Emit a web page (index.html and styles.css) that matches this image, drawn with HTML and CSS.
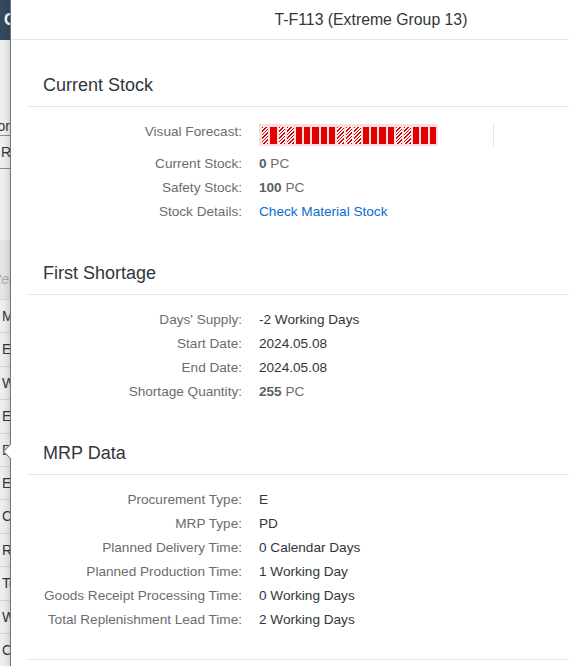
FILE: index.html
```html
<!DOCTYPE html>
<html lang="en">
<head>
<meta charset="utf-8">
<title>T-F113 (Extreme Group 13)</title>
<link rel="stylesheet" href="styles.css">
</head>
<body>
<div class="app">
  <div class="bg">
    <div class="bg-shell">Check</div>
    <div class="bg-filter">
      <div class="bg-label">Vendor</div>
      <div class="bg-input">RM</div>
    </div>
    <div class="bg-search">Material</div>
    <div class="bg-table">
      <div class="bg-row">MRP</div>
      <div class="bg-row">Ext</div>
      <div class="bg-row">Wor</div>
      <div class="bg-row">Ext</div>
      <div class="bg-row">Dis</div>
      <div class="bg-row">Ext</div>
      <div class="bg-row">Cur</div>
      <div class="bg-row">Rep</div>
      <div class="bg-row">Tot</div>
      <div class="bg-row">Wor</div>
      <div class="bg-row">Con</div>
    </div>
  </div>

  <div class="popover">
    <div class="pop-arrow"></div>
    <div class="pop-header">T-F113 (Extreme Group 13)</div>

    <section class="sec sec-first">
      <h2 class="sec-title">Current Stock</h2>
      <div class="form">
        <div class="lbl lbl-tall">Visual Forecast:</div>
        <div class="val val-tall">
          <div class="fc-wrap">
            <div class="fc-bar">
              <span class="seg hatch"></span><span class="seg"></span><span class="seg hatch"></span><span class="seg hatch"></span><span class="seg"></span><span class="seg"></span><span class="seg"></span><span class="seg"></span><span class="seg"></span><span class="seg hatch"></span><span class="seg hatch"></span><span class="seg hatch"></span><span class="seg"></span><span class="seg"></span><span class="seg"></span><span class="seg"></span><span class="seg hatch"></span><span class="seg hatch"></span><span class="seg"></span><span class="seg"></span><span class="seg"></span>
            </div>
          </div>
        </div>
        <div class="lbl">Current Stock:</div>
        <div class="val"><span class="num">0</span> <span class="unit">PC</span></div>
        <div class="lbl">Safety Stock:</div>
        <div class="val"><span class="num">100</span> <span class="unit">PC</span></div>
        <div class="lbl">Stock Details:</div>
        <div class="val"><a class="link" href="#">Check Material Stock</a></div>
      </div>
    </section>

    <section class="sec">
      <h2 class="sec-title">First Shortage</h2>
      <div class="form">
        <div class="lbl">Days' Supply:</div>
        <div class="val">-2 Working Days</div>
        <div class="lbl">Start Date:</div>
        <div class="val">2024.05.08</div>
        <div class="lbl">End Date:</div>
        <div class="val">2024.05.08</div>
        <div class="lbl">Shortage Quantity:</div>
        <div class="val"><span class="num">255</span> <span class="unit">PC</span></div>
      </div>
    </section>

    <section class="sec sec-last">
      <h2 class="sec-title">MRP Data</h2>
      <div class="form">
        <div class="lbl">Procurement Type:</div>
        <div class="val">E</div>
        <div class="lbl">MRP Type:</div>
        <div class="val">PD</div>
        <div class="lbl">Planned Delivery Time:</div>
        <div class="val">0 Calendar Days</div>
        <div class="lbl">Planned Production Time:</div>
        <div class="val">1 Working Day</div>
        <div class="lbl">Goods Receipt Processing Time:</div>
        <div class="val">0 Working Days</div>
        <div class="lbl">Total Replenishment Lead Time:</div>
        <div class="val">2 Working Days</div>
      </div>
    </section>
    <div class="pop-footer"></div>
  </div>
</div>
</body>
</html>
```

FILE: styles.css
```css
* { box-sizing: border-box; }

html, body {
  margin: 0;
  padding: 0;
  background: #ffffff;
  overflow: hidden;
}

body {
  font-family: "Liberation Sans", Arial, sans-serif;
  color: #32363a;
}

.app {
  display: flex;
  width: 569px;
  height: 666px;
  overflow: hidden;
}

/* ---- background application (behind the popover) ---- */
.bg {
  flex: none;
  width: 10px;
  height: 666px;
  overflow: hidden;
  background: #ededee;
  display: flex;
  flex-direction: column;
  font-size: 14px;
  white-space: nowrap;
}

.bg-shell {
  flex: none;
  height: 40px;
  background: #354a5f;
  color: #ffffff;
  font-size: 16px;
  font-weight: bold;
  line-height: 40px;
  padding-left: 4px;
}

.bg-filter {
  flex: none;
  height: 200px;
  padding-top: 78px;
  background: #efeff0;
}

.bg-label {
  display: flex;
  justify-content: flex-end;
  height: 17px;
  line-height: 17px;
  color: #32363a;
  overflow: hidden;
}

.bg-input {
  height: 34px;
  border-top: 1px solid #8a8f94;
  border-bottom: 1px solid #8a8f94;
  line-height: 32px;
  padding-left: 1px;
  color: #32363a;
}

.bg-search {
  flex: none;
  height: 59px;
  background: #e6e6e7;
  color: #a9acb0;
  font-style: italic;
  line-height: 78px;
  text-indent: -22px;
}

.bg-table {
  flex: none;
  display: flex;
  flex-direction: column;
}

.bg-row {
  height: 33.4px;
  border-top: 1px solid #d4d5d6;
  line-height: 33px;
  padding-left: 2px;
  color: #32363a;
  background: #eeeeef;
}

/* ---- popover ---- */
.popover {
  position: relative;
  flex: none;
  width: 721px;
  height: 666px;
  background: #ffffff;
  border-left: 1px solid #6f767d;
  box-shadow: -2px 0 6px rgba(0, 0, 0, 0.15);
}

.pop-arrow {
  position: absolute;
  left: -6px;
  top: 446px;
  width: 11px;
  height: 11px;
  background: #ffffff;
  border-left: 1px solid #6f767d;
  border-bottom: 1px solid #6f767d;
  transform: rotate(45deg);
}

.pop-header {
  height: 40px;
  border-bottom: 1px solid #e5e5e5;
  text-align: center;
  font-size: 15.8px;
  line-height: 39px;
  color: #32363a;
}

.sec {
  margin-left: 16px;
}

.sec-first {
  margin-top: 24px;
}

.sec-title {
  margin: 0;
  height: 43px;
  padding-left: 16px;
  border-bottom: 1px solid #e5e5e5;
  font-size: 18px;
  font-weight: normal;
  line-height: 42px;
  color: #32363a;
}

.form {
  display: grid;
  grid-template-columns: 215px 1fr;
  column-gap: 17px;
  padding: 13px 0 28px 0;
  font-size: 13.6px;
  line-height: 24px;
}

.sec-last .form {
  padding-bottom: 27px;
}

.lbl {
  text-align: right;
  color: #6a6d70;
  white-space: nowrap;
}

.lbl-tall,
.val-tall {
  height: 32px;
}

.val {
  color: #32363a;
  white-space: nowrap;
}

.num {
  font-weight: bold;
  color: #5b5f63;
}

.unit {
  color: #6a6d70;
}

.link {
  color: #0a6ed1;
  text-decoration: none;
}

.fc-wrap {
  width: 235px;
  height: 22px;
  margin-top: 4px;
  border-right: 1px solid #e3e3e3;
}

.fc-bar {
  width: 179px;
  height: 22px;
  padding: 3px 2px 2px 3px;
  background: #fbdede;
  display: flex;
  gap: 2px;
}

.seg {
  flex: 1;
  background: #e00000;
}

.seg.hatch {
  background: repeating-linear-gradient(135deg, #e00000 0 1.3px, #ffffff 1.3px 2.5px);
}

.pop-footer {
  margin-left: 16px;
  border-top: 1px solid #e5e5e5;
}
```
